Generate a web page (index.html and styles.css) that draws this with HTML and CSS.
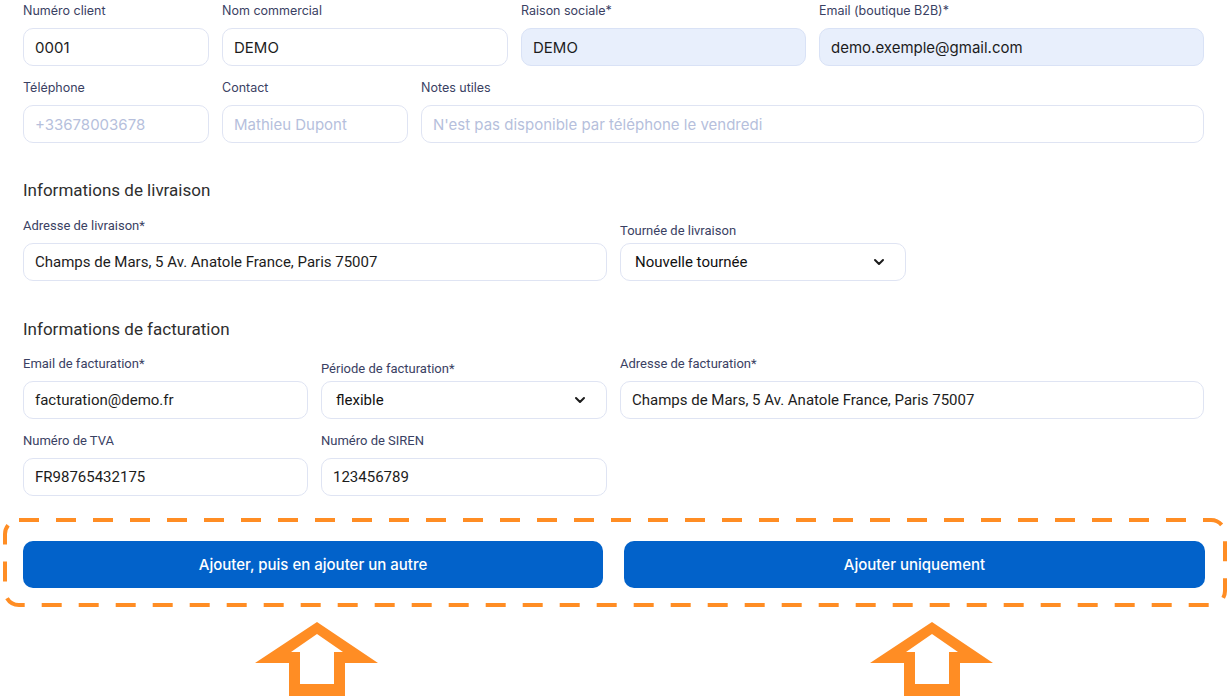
FILE: index.html
```html
<!DOCTYPE html>
<html lang="fr">
<head>
<meta charset="UTF-8">
<meta name="viewport" content="width=device-width, initial-scale=1.0">
<title>Nouveau client</title>
<link rel="stylesheet" href="styles.css">
</head>
<body>
<form class="client-form">

    <!-- Identité -->
    <div class="row row-ident">
        <div class="field">
            <label>Numéro client</label>
            <input class="input" type="text" value="0001">
        </div>
        <div class="field">
            <label>Nom commercial</label>
            <input class="input" type="text" value="DEMO">
        </div>
        <div class="field">
            <label>Raison sociale*</label>
            <input class="input filled" type="text" value="DEMO">
        </div>
        <div class="field">
            <label>Email (boutique B2B)*</label>
            <input class="input filled" type="text" value="demo.exemple@gmail.com">
        </div>
    </div>

    <div class="row row-contact">
        <div class="field">
            <label>Téléphone</label>
            <input class="input" type="text" placeholder="+33678003678">
        </div>
        <div class="field">
            <label>Contact</label>
            <input class="input" type="text" placeholder="Mathieu Dupont">
        </div>
        <div class="field">
            <label>Notes utiles</label>
            <input class="input" type="text" placeholder="N'est pas disponible par téléphone le vendredi">
        </div>
    </div>

    <!-- Livraison -->
    <h2 class="section-title">Informations de livraison</h2>
    <div class="row row-delivery alt">
        <div class="field">
            <label>Adresse de livraison*</label>
            <input class="input" type="text" value="Champs de Mars, 5 Av. Anatole France, Paris 75007">
        </div>
        <div class="field select-field">
            <label>Tournée de livraison</label>
            <div class="select">
                <span>Nouvelle tournée</span>
                <svg class="chevron" width="12" height="8" viewBox="0 0 12 8"><path d="M2 2 L6 6 L10 2" fill="none" stroke="#1c1c1c" stroke-width="2" stroke-linecap="round" stroke-linejoin="round"/></svg>
            </div>
        </div>
    </div>

    <!-- Facturation -->
    <h2 class="section-title">Informations de facturation</h2>
    <div class="row row-billing alt">
        <div class="field">
            <label>Email de facturation*</label>
            <input class="input" type="text" value="facturation@demo.fr">
        </div>
        <div class="field select-field">
            <label>Période de facturation*</label>
            <div class="select">
                <span>flexible</span>
                <svg class="chevron" width="12" height="8" viewBox="0 0 12 8"><path d="M2 2 L6 6 L10 2" fill="none" stroke="#1c1c1c" stroke-width="2" stroke-linecap="round" stroke-linejoin="round"/></svg>
            </div>
        </div>
        <div class="field">
            <label>Adresse de facturation*</label>
            <input class="input" type="text" value="Champs de Mars, 5 Av. Anatole France, Paris 75007">
        </div>
    </div>

    <div class="row row-billing alt">
        <div class="field">
            <label>Numéro de TVA</label>
            <input class="input" type="text" value="FR98765432175">
        </div>
        <div class="field">
            <label>Numéro de SIREN</label>
            <input class="input" type="text" value="123456789">
        </div>
    </div>

    <!-- Boutons -->
    <div class="actions">
        <button type="button" class="btn">Ajouter, puis en ajouter un autre</button>
        <button type="button" class="btn">Ajouter uniquement</button>
        <svg class="highlight" width="1226" height="90" viewBox="0 0 1226 90">
            <rect x="2" y="2" width="1220" height="85" rx="14" ry="14" fill="none" stroke="#ff8d24" stroke-width="4" stroke-dasharray="20 17"/>
        </svg>
    </div>

    <div class="pointers">
        <svg class="arrow arrow-left" width="124" height="74" viewBox="0 0 124 74">
            <path fill="#ff8d24" fill-rule="evenodd" d="M62 0 L123 41 L90 41 L90 74 L34 74 L34 41 L0 41 Z M62 12 L88 30 L79 30 L79 62 L45 62 L45 30 L36 30 Z"/>
        </svg>
        <svg class="arrow arrow-right" width="124" height="74" viewBox="0 0 124 74">
            <path fill="#ff8d24" fill-rule="evenodd" d="M62 0 L123 41 L90 41 L90 74 L34 74 L34 41 L0 41 Z M62 12 L88 30 L79 30 L79 62 L45 62 L45 30 L36 30 Z"/>
        </svg>
    </div>
</form>
</body>
</html>
```

FILE: styles.css
```css
body {
  margin: 0;
  background: #fff;
  font-family: 'Inter', sans-serif;
  overflow: hidden;
}
.client-form {
  width: 1182px;
  padding: 2px 0 0 23px;
}
.row {
  display: grid;
  column-gap: 13px;
  margin-bottom: 13px;
}
.row-ident {
  grid-template-columns: 186px 286px 285px 385px;
}
.row-contact {
  grid-template-columns: 186px 186px 783px;
}
.row-delivery {
  grid-template-columns: 584px 286px;
  align-items: end;
}
.row-billing {
  grid-template-columns: 285px 286px 584px;
  align-items: end;
}
.field {
  display: flex;
  flex-direction: column;
}
.field label {
  font-size: 12.5px;
  line-height: 18px;
  color: #3a4163;
  margin-bottom: 8px;
}
.select-field label {
  margin-bottom: 3px;
}
.input,
.select {
  height: 38px;
  box-sizing: border-box;
  border: 1px solid #dfe4f3;
  border-radius: 10px;
  padding: 0 11px;
  font-family: 'Inter', sans-serif;
  font-size: 15px;
  color: #1c1c1c;
  background: #fff;
  outline: none;
  width: 100%;
}
.input::placeholder {
  color: #b6bfdc;
}
.input.filled {
  background: #e8effc;
  border-color: #d9e2f6;
}
/* la partie basse utilise une police plus étroite */
.alt .field label {
  font-family: 'Roboto', sans-serif;
  font-size: 13px;
}
.alt .input {
  font-family: 'Roboto', sans-serif;
  font-size: 15px;
}
.select {
  display: flex;
  align-items: center;
  justify-content: space-between;
  padding: 0 20px 0 14px;
  font-family: 'Roboto', sans-serif;
  font-size: 15px;
  font-weight: 400;
  color: #111;
}
.section-title {
  font-family: 'Roboto', sans-serif;
  font-size: 17px;
  font-weight: 400;
  line-height: 22px;
  color: #2e2e2e;
  margin: 36px 0 16px;
}
.row-delivery + .section-title {
  margin: 37px 0 15px;
}
.actions {
  position: relative;
  display: grid;
  grid-template-columns: 580px 581px;
  column-gap: 21px;
  margin-top: 45px;
}
.btn {
  height: 47px;
  border: none;
  border-radius: 10px;
  background: #0262ca;
  color: #fff;
  font-family: 'Inter', sans-serif;
  font-size: 15px;
  font-weight: 500;
  cursor: pointer;
}
.highlight {
  position: absolute;
  left: -20px;
  top: -23px;
}
.pointers {
  display: flex;
  padding-top: 34px;
}
.arrow {
  display: block;
}
.arrow-left {
  margin-left: 232px;
}
.arrow-right {
  margin-left: 491px;
}
```
